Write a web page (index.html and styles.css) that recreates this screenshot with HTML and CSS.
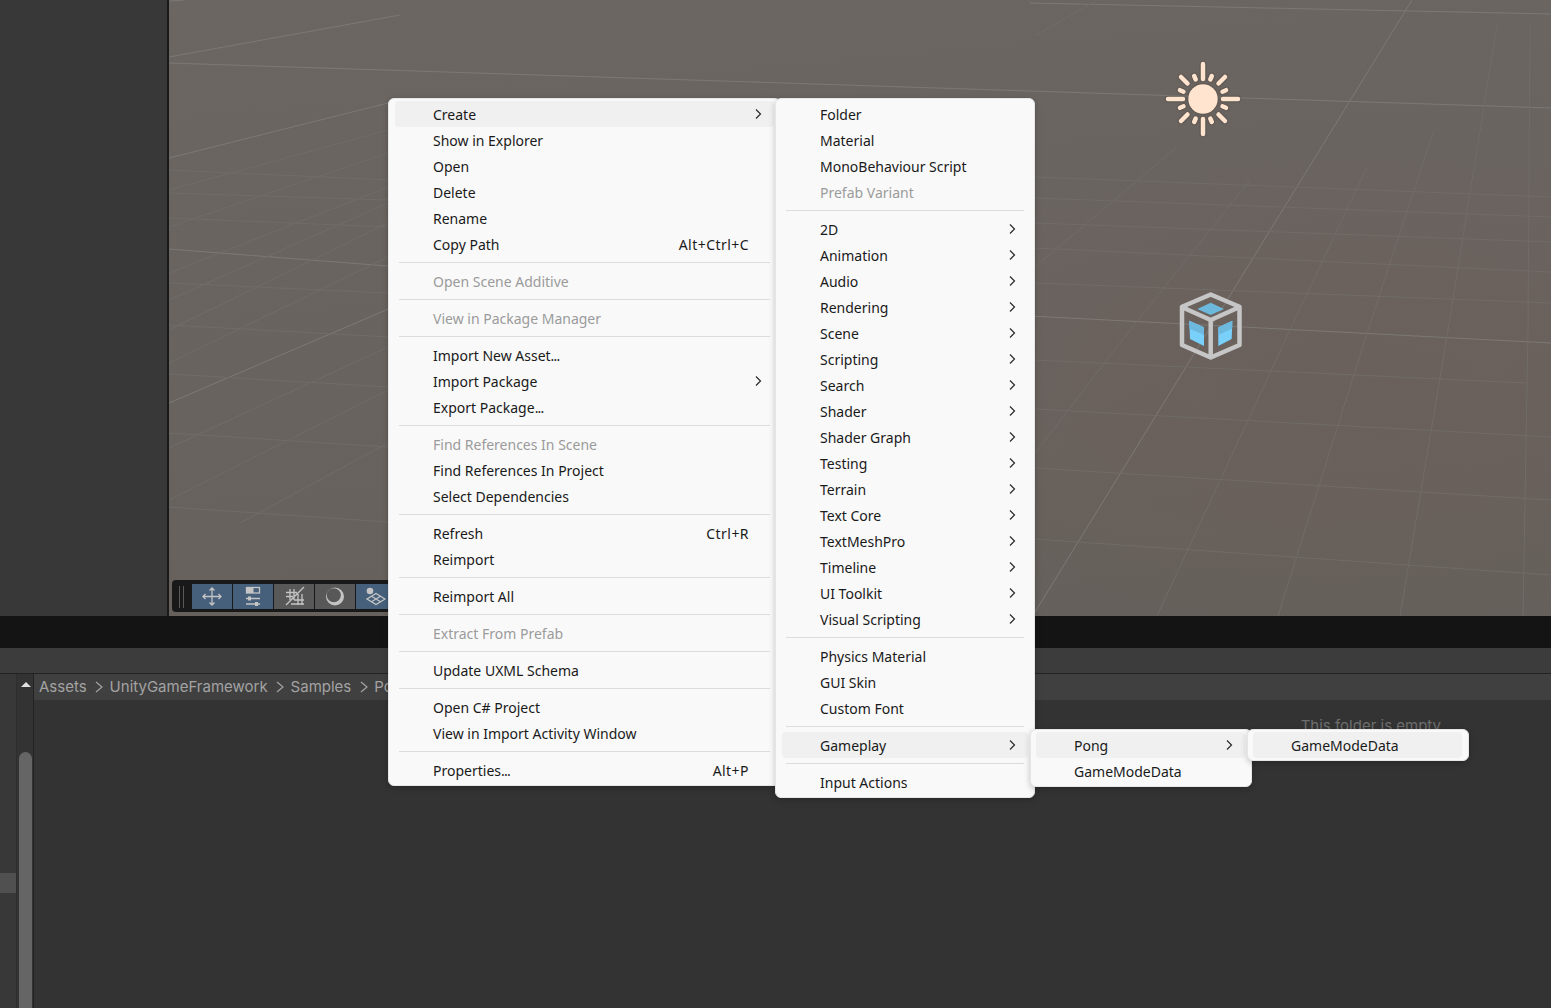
FILE: index.html
```html
<!DOCTYPE html>
<html lang="en">
<head>
  <meta charset="UTF-8">
  <meta name="viewport" content="width=device-width, initial-scale=1.0">
  <title>Unity Editor - Project context menu</title>
  <link rel="stylesheet" href="styles.css">
</head>
<body>
  <div class="editor">
    <div class="top-area">
      <div class="hierarchy"></div>
      <div class="scene">
        <!-- grid lines use page coordinates -->
        <svg class="grid" viewBox="169 0 1382 616" width="1382" height="616">
          <g class="grid-strong">
            <path d="M169 57L400 15M169 63L1551 108M169 158L400 100M169 249L1030 316L1551 343M169 403L400 304M1030 3L1551 14M169 1L185 0"/>
            <path d="M1412 0L1035 612"/>
          </g>
          <g class="grid-faint">
            <path d="M1035 360L1527 383M1035 409L1551 437M1035 468L1551 500M1035 539L1551 575"/>
            <path d="M1157 616L1290 330L1367 167M1278 616L1368 330L1433 133M1400 616L1448 330L1497 25M1523 616L1528 330L1530 23"/>
            <path d="M1035 453L1130 330L1250 180M1035 267L1177 147M1035 36L1097 0"/>
            <path d="M1035 283L1551 303M1035 248L1551 272M1035 223L1551 242M1035 198L1551 217M1035 177L1551 197"/>
            <path d="M169 170L388 180M169 193L388 200M169 218L388 227M169 283L388 293M169 325L388 337M169 374L388 387M169 433L388 447M169 507L388 522"/>
            <path d="M169 190L388 130M169 227L388 153M169 273L388 187M169 300L388 203M169 330L388 223M169 363L388 257M169 448L388 347M169 500L388 390M240 523L388 443"/>
          </g>
        </svg>

        <svg class="sun" viewBox="-40 -40 80 80" width="80" height="80">
          <g class="sun-rays">
            <path d="M0 -20V-35M0 20V35M-20 0H-35M20 0H35"/>
            <path d="M-15.500 -15.500L-22 -22M15.500 -15.500L22 -22M-15.500 15.500L-22 22M15.500 15.500L22 22"/>
            <path d="M-7.300 -19.500L-8.800 -23M7.300 -19.500L8.800 -23M-7.300 19.500L-8.800 23M7.300 19.500L8.800 23M-19.500 -7.300L-23 -8.800M19.500 -7.300L23 -8.800M-19.500 7.300L-23 8.800M19.500 7.300L23 8.800"/>
          </g>
          <circle class="sun-disc" r="14.700"/>
        </svg>

        <svg class="cube" viewBox="0 0 66 70" width="66" height="70">
          <path class="cube-top" d="M32.700 11.700L46 18L32.700 24L19.300 18Z"/>
          <path class="cube-face" d="M11.300 29.700L26 36.300V55L12 48Z"/>
          <path class="cube-face" d="M54.300 29.700L40.300 36.300V55L53.700 48Z"/>
          <path class="cube-strip" d="M11.300 29.700L26 36.300V44L11.300 37.500ZM54.300 29.700L40.300 36.300V44L54.300 37.500Z"/>
          <path class="cube-line" d="M32.700 3.500L61.500 15.700V54L32.700 66.500L4 54V15.700ZM5.300 16.700L32.700 29L60 16.700M32.700 29V66"/>
        </svg>

        <div class="scene-toolbar">
          <span class="handle"></span>
          <span class="tool-btn on">
            <svg viewBox="0 0 40 25" width="40" height="25"><path d="M20 4V21M11 12.500H29M17.500 6.500L20 4L22.500 6.500M17.500 18.500L20 21L22.500 18.500M13.500 10L11 12.500L13.500 15M26.500 10L29 12.500L26.500 15"/></svg>
          </span>
          <span class="tool-btn on">
            <svg viewBox="0 0 40 25" width="40" height="25"><rect x="13.500" y="3.500" width="13" height="5.500"/><rect class="fill" x="13.500" y="3.500" width="7" height="5.500"/><path d="M13 14.500H27M13 20H27"/><rect class="fill" x="15" y="12.500" width="3" height="4"/><rect class="fill" x="22" y="18" width="3" height="4"/></svg>
          </span>
          <span class="tool-btn">
            <svg viewBox="0 0 40 25" width="40" height="25"><path d="M12 21L30 3M16 5V16M20 5V16M24 10V21M28 10V21M12 8.500H23M12 12.500H19M20 16H30M17 20H30"/></svg>
          </span>
          <span class="tool-btn">
            <svg viewBox="0 0 40 25" width="40" height="25"><path class="fill" fill-rule="evenodd" d="M20 3.500A9 9 0 1 1 20 21.500A9 9 0 1 1 20 3.500ZM18.800 4.300A7 7 0 1 0 18.800 18.300A7 7 0 1 0 18.800 4.300Z"/></svg>
          </span>
          <span class="tool-btn on">
            <svg viewBox="0 0 40 25" width="40" height="25"><circle class="fill" cx="14" cy="7" r="3.300"/><path d="M20 9.500L29 15L20 20.500L11 15ZM15.500 12.300L24.500 17.800M24.500 12.300L15.500 17.800"/></svg>
          </span>
        </div>
      </div>
    </div>

    <div class="black-bar"></div>
    <div class="project-tabs"></div>
    <div class="breadcrumb-row">
      <div class="strip"></div>
      <div class="scroll-col"><span class="scroll-up"></span></div>
      <div class="breadcrumbs">
        <span>Assets</span>
        <svg class="crumb-sep" viewBox="0 0 8 12" width="8" height="12"><path d="M1 1L7 6L1 11"/></svg>
        <span>UnityGameFramework</span>
        <svg class="crumb-sep" viewBox="0 0 8 12" width="8" height="12"><path d="M1 1L7 6L1 11"/></svg>
        <span>Samples</span>
        <svg class="crumb-sep" viewBox="0 0 8 12" width="8" height="12"><path d="M1 1L7 6L1 11"/></svg>
        <span>Pong</span>
      </div>
    </div>
    <div class="project-body">
      <div class="strip"><div class="strip-tab"></div></div>
      <div class="scroll-col"><div class="scroll-thumb"></div></div>
      <div class="folder-view">
        <p class="empty-note">This folder is empty</p>
      </div>
    </div>
  </div>

  <!-- context menu -->
  <div class="menu menu-main">
    <div class="item active"><span>Create</span><svg class="arrow" viewBox="0 0 7 10" width="7" height="10"><path d="M1 0.500L5.500 5L1 9.500"/></svg></div>
    <div class="item"><span>Show in Explorer</span></div>
    <div class="item"><span>Open</span></div>
    <div class="item"><span>Delete</span></div>
    <div class="item"><span>Rename</span></div>
    <div class="item"><span>Copy Path</span><span class="keys">Alt+Ctrl+C</span></div>
    <div class="sep"></div>
    <div class="item off"><span>Open Scene Additive</span></div>
    <div class="sep"></div>
    <div class="item off"><span>View in Package Manager</span></div>
    <div class="sep"></div>
    <div class="item"><span>Import New Asset<span class="dots">...</span></span></div>
    <div class="item"><span>Import Package</span><svg class="arrow" viewBox="0 0 7 10" width="7" height="10"><path d="M1 0.500L5.500 5L1 9.500"/></svg></div>
    <div class="item"><span>Export Package<span class="dots">...</span></span></div>
    <div class="sep"></div>
    <div class="item off"><span>Find References In Scene</span></div>
    <div class="item"><span>Find References In Project</span></div>
    <div class="item"><span>Select Dependencies</span></div>
    <div class="sep"></div>
    <div class="item"><span>Refresh</span><span class="keys">Ctrl+R</span></div>
    <div class="item"><span>Reimport</span></div>
    <div class="sep"></div>
    <div class="item"><span>Reimport All</span></div>
    <div class="sep"></div>
    <div class="item off"><span>Extract From Prefab</span></div>
    <div class="sep"></div>
    <div class="item"><span>Update UXML Schema</span></div>
    <div class="sep"></div>
    <div class="item"><span>Open C# Project</span></div>
    <div class="item"><span>View in Import Activity Window</span></div>
    <div class="sep"></div>
    <div class="item"><span>Properties<span class="dots">...</span></span><span class="keys">Alt+P</span></div>
  </div>

  <div class="menu menu-create">
    <div class="item"><span>Folder</span></div>
    <div class="item"><span>Material</span></div>
    <div class="item"><span>MonoBehaviour Script</span></div>
    <div class="item off"><span>Prefab Variant</span></div>
    <div class="sep"></div>
    <div class="item"><span>2D</span><svg class="arrow" viewBox="0 0 7 10" width="7" height="10"><path d="M1 0.500L5.500 5L1 9.500"/></svg></div>
    <div class="item"><span>Animation</span><svg class="arrow" viewBox="0 0 7 10" width="7" height="10"><path d="M1 0.500L5.500 5L1 9.500"/></svg></div>
    <div class="item"><span>Audio</span><svg class="arrow" viewBox="0 0 7 10" width="7" height="10"><path d="M1 0.500L5.500 5L1 9.500"/></svg></div>
    <div class="item"><span>Rendering</span><svg class="arrow" viewBox="0 0 7 10" width="7" height="10"><path d="M1 0.500L5.500 5L1 9.500"/></svg></div>
    <div class="item"><span>Scene</span><svg class="arrow" viewBox="0 0 7 10" width="7" height="10"><path d="M1 0.500L5.500 5L1 9.500"/></svg></div>
    <div class="item"><span>Scripting</span><svg class="arrow" viewBox="0 0 7 10" width="7" height="10"><path d="M1 0.500L5.500 5L1 9.500"/></svg></div>
    <div class="item"><span>Search</span><svg class="arrow" viewBox="0 0 7 10" width="7" height="10"><path d="M1 0.500L5.500 5L1 9.500"/></svg></div>
    <div class="item"><span>Shader</span><svg class="arrow" viewBox="0 0 7 10" width="7" height="10"><path d="M1 0.500L5.500 5L1 9.500"/></svg></div>
    <div class="item"><span>Shader Graph</span><svg class="arrow" viewBox="0 0 7 10" width="7" height="10"><path d="M1 0.500L5.500 5L1 9.500"/></svg></div>
    <div class="item"><span>Testing</span><svg class="arrow" viewBox="0 0 7 10" width="7" height="10"><path d="M1 0.500L5.500 5L1 9.500"/></svg></div>
    <div class="item"><span>Terrain</span><svg class="arrow" viewBox="0 0 7 10" width="7" height="10"><path d="M1 0.500L5.500 5L1 9.500"/></svg></div>
    <div class="item"><span>Text Core</span><svg class="arrow" viewBox="0 0 7 10" width="7" height="10"><path d="M1 0.500L5.500 5L1 9.500"/></svg></div>
    <div class="item"><span>TextMeshPro</span><svg class="arrow" viewBox="0 0 7 10" width="7" height="10"><path d="M1 0.500L5.500 5L1 9.500"/></svg></div>
    <div class="item"><span>Timeline</span><svg class="arrow" viewBox="0 0 7 10" width="7" height="10"><path d="M1 0.500L5.500 5L1 9.500"/></svg></div>
    <div class="item"><span>UI Toolkit</span><svg class="arrow" viewBox="0 0 7 10" width="7" height="10"><path d="M1 0.500L5.500 5L1 9.500"/></svg></div>
    <div class="item"><span>Visual Scripting</span><svg class="arrow" viewBox="0 0 7 10" width="7" height="10"><path d="M1 0.500L5.500 5L1 9.500"/></svg></div>
    <div class="sep"></div>
    <div class="item"><span>Physics Material</span></div>
    <div class="item"><span>GUI Skin</span></div>
    <div class="item"><span>Custom Font</span></div>
    <div class="sep"></div>
    <div class="item active"><span>Gameplay</span><svg class="arrow" viewBox="0 0 7 10" width="7" height="10"><path d="M1 0.500L5.500 5L1 9.500"/></svg></div>
    <div class="sep"></div>
    <div class="item"><span>Input Actions</span></div>
  </div>

  <div class="menu menu-gameplay">
    <div class="item active"><span>Pong</span><svg class="arrow" viewBox="0 0 7 10" width="7" height="10"><path d="M1 0.500L5.500 5L1 9.500"/></svg></div>
    <div class="item"><span>GameModeData</span></div>
  </div>

  <div class="menu menu-pong">
    <div class="item active"><span>GameModeData</span></div>
  </div>
</body>
</html>
```

FILE: styles.css
```css
* {
  margin: 0;
  padding: 0;
  box-sizing: border-box;
}

body {
  width: 1551px;
  height: 1008px;
  overflow: hidden;
  background-color: #333;
  font-family: "Noto Sans", Arial, sans-serif;
}

.editor {
  display: flex;
  flex-direction: column;
  height: 1008px;
}

.top-area {
  display: flex;
  height: 616px;
}

.hierarchy {
  width: 169px;
  background-color: #383838;
  border-right: 2px solid #191919;
}

.scene {
  position: relative;
  flex: 1;
  overflow: hidden;
  background:
    radial-gradient(ellipse 500px 260px at 85% 62%, rgba(112, 92, 86, 0.35), transparent),
    linear-gradient(175deg, #6b6662 0%, #69635f 55%, #65605b 100%);
}

.grid {
  position: absolute;
  left: 0;
  top: 0;
}

.grid path {
  fill: none;
}

.grid-strong {
  stroke: #7c7975;
  stroke-width: 1;
}

.grid-faint {
  stroke: #706c68;
  stroke-width: 1;
}

.sun {
  position: absolute;
  left: 994px;
  top: 59px;
  filter: drop-shadow(0 0 1px rgba(60, 40, 30, 0.7));
}

.sun-rays path {
  fill: none;
  stroke: #ffe5d0;
  stroke-width: 4.5;
  stroke-linecap: round;
}

.sun-disc {
  fill: #ffe5d0;
}

.cube {
  position: absolute;
  left: 1009px;
  top: 291px;
}

.cube-line {
  fill: none;
  stroke: #c6c6c6;
  stroke-width: 4.5;
  stroke-linejoin: round;
}

.cube-top {
  fill: #6cb9dd;
}

.cube-face {
  fill: #78d0fb;
}

.cube-strip {
  fill: #6cb9dd;
}

.scene-toolbar {
  position: absolute;
  left: 3px;
  top: 580px;
  display: flex;
  gap: 1px;
  width: 260px;
  height: 32px;
  padding: 4px 0 3px 7px;
  background-color: #191919;
  border-radius: 4px;
}

.handle {
  width: 12px;
  border-left: 1px solid #5a5a5a;
  height: 22px;
  margin-top: 2px;
  position: relative;
}

.handle::after {
  content: "";
  position: absolute;
  left: 3px;
  top: 0;
  height: 22px;
  border-left: 1px solid #5a5a5a;
}

.tool-btn {
  width: 40px;
  height: 25px;
  background-color: #585858;
}

.tool-btn.on {
  background-color: #46607c;
}

.tool-btn svg {
  display: block;
  fill: none;
  stroke: #c4c4c4;
  stroke-width: 1.3;
}

.tool-btn .fill {
  fill: #c4c4c4;
  stroke: none;
}

.black-bar {
  height: 32px;
  background-color: #141414;
}

.project-tabs {
  height: 26px;
  background-color: #3c3c3c;
  border-bottom: 1px solid #232323;
}

.breadcrumb-row {
  display: flex;
  height: 26px;
  background-color: #404040;
}

.strip {
  width: 16px;
  background-color: #383838;
}

.scroll-col {
  width: 18px;
  background-color: #333;
  border-left: 1px solid #2e2e2e;
  border-right: 1px solid #232323;
  position: relative;
}

.scroll-up {
  position: absolute;
  left: 4px;
  top: 8px;
  border-left: 5px solid transparent;
  border-right: 5px solid transparent;
  border-bottom: 5px solid #e0e0e0;
}

.breadcrumbs {
  display: flex;
  align-items: center;
  padding: 0 0 2px 5px;
  font-family: Inter, Arial, sans-serif;
  font-size: 15px;
  color: #a3a3a3;
  white-space: nowrap;
}

.crumb-sep {
  margin: 2px 6.500px 0 8.500px;
  fill: none;
  stroke: #a3a3a3;
  stroke-width: 1.2;
}

.project-body {
  display: flex;
  flex: 1;
  background-color: #333;
}

.project-body .strip {
  padding-top: 173px;
}

.strip-tab {
  height: 20px;
  background-color: #505050;
}

.project-body .scroll-col {
  padding: 52px 0 0 2px;
}

.scroll-thumb {
  width: 13px;
  height: 100%;
  background-color: #656565;
  border-radius: 7px 7px 0 0;
}

.folder-view {
  flex: 1;
  padding: 16px 110px 0 0;
  text-align: right;
}

.empty-note {
  font-family: Inter, Arial, sans-serif;
  font-size: 15px;
  color: #6e6e6e;
}

/* context menu */
.menu {
  position: absolute;
  padding: 2px 6px 1px;
  background-color: #f9f9f9;
  border: 1px solid #e6e6e6;
  border-radius: 6px;
  box-shadow: 0 2px 6px rgba(0, 0, 0, 0.22);
  font-size: 14px;
  color: #1a1a1a;
}

.menu-main {
  left: 388px;
  top: 98px;
  width: 393px;
  height: 688px;
}

.menu-create {
  left: 775px;
  top: 98px;
  width: 260px;
  height: 700px;
}

.menu-gameplay {
  left: 1030px;
  top: 729px;
  width: 222px;
  height: 58px;
  padding-left: 5px;
}

.menu-pong {
  left: 1247px;
  top: 729px;
  width: 222px;
  height: 32px;
  padding-left: 5px;
}

.item {
  display: grid;
  grid-template-columns: 1fr auto 25px;
  align-items: center;
  height: 26px;
  padding-left: 38px;
  border-radius: 4px;
  white-space: nowrap;
}

.item.active {
  background-color: #f0f0f0;
}

.item.off {
  color: #9b9b9b;
}

.keys {
  grid-column: 2;
  letter-spacing: 0.45px;
}

.dots {
  letter-spacing: -0.8px;
}

.arrow {
  grid-column: 3;
  justify-self: end;
  margin-right: 12px;
  fill: none;
  stroke: #2a2a2a;
  stroke-width: 1.2;
}

.sep {
  height: 1px;
  margin: 5px 4px;
  background-color: #dcdcdc;
}
```
